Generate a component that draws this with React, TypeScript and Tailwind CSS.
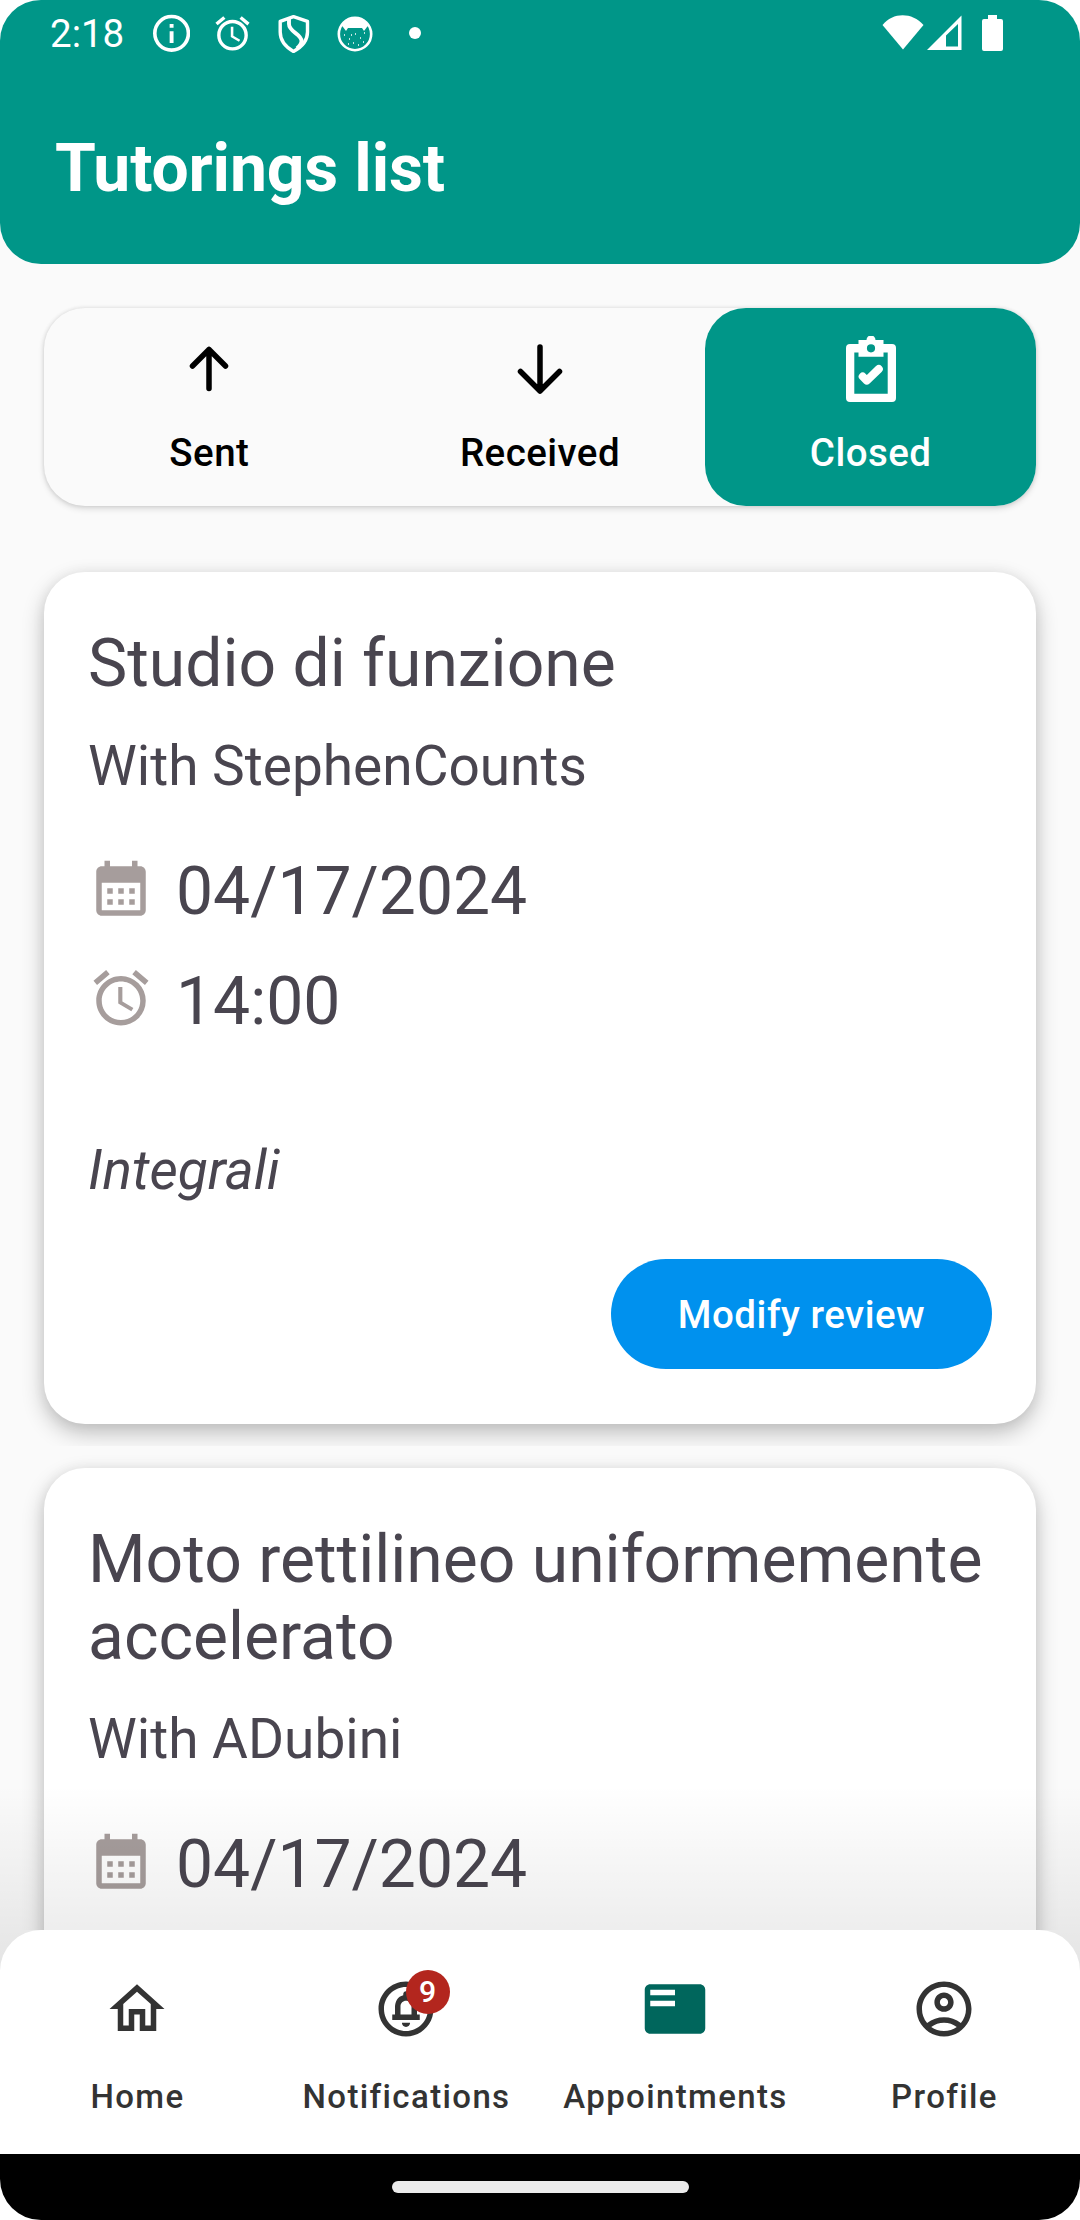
import React from "react";
import {
  MdOutlineHome,
  MdOutlineCircleNotifications,
  MdFeaturedPlayList,
  MdOutlineAccountCircle,
  MdAlarm,
} from "react-icons/md";

function StatusBar() {
  return (
    <div className="flex h-[66px] items-start justify-between pl-[50px] pr-[77px] text-white">
      <div className="flex items-start pt-[12px]">
        <span className="mt-[-1px] w-[102px] text-[38.5px] leading-[45px]">2:18</span>
        <svg className="mt-[2px] h-[38px] w-[38px]" viewBox="0 0 38 38" fill="none" stroke="#fff">
          <circle cx="19.600" cy="19.300" r="16.800" strokeWidth="3.600" />
          <path d="M19.600 17.300V29M19.600 10V13.800" strokeWidth="3.900" />
        </svg>
        <MdAlarm className="ml-[22px] mt-[1px] h-[41px] w-[41px]" />
        <svg className="ml-[24px] mt-[2px] h-[40px] w-[34px]" viewBox="0 0 34 40" fill="none" stroke="#fff" strokeWidth="3.4" strokeLinejoin="round">
          <path d="M16.500 2.600L30.500 7.400V18C30.500 27 24 33.500 16.500 37.400C9.500 33.500 3.200 27 3.200 18V7.400Z" />
          <path d="M12 4.500V10C12 18 24.500 20 24.500 27C24.500 30 22.500 32 20 34.500" strokeWidth="3.900" />
        </svg>
        <svg className="ml-[25px] mt-[3px] h-[38px] w-[38px]" viewBox="0 0 38 38">
          <circle cx="19" cy="19" r="16.2" fill="none" stroke="#fff" strokeWidth="2.6" />
          <path d="M5 10C12 0 26 0 33 10L31 12L28 16L26 13H12L10 16L7 12Z" fill="#fff" />
          <path d="M8 20h1M13 24h1M19 19h1M24 23h1M28 18h1M17 28h1M22 30h1M12 29h1M27 27h1M15 20h1" stroke="#fff" strokeWidth="1.4" />
        </svg>
        <span className="ml-[35px] mt-[15px] h-[12px] w-[12px] rounded-full bg-white" />
      </div>
      <svg className="mt-[15px] h-[37px] w-[121px]" viewBox="0 0 121 37" fill="#fff">
        <path d="M0.5 10C11 -3 30 -3 41.500 10L21 34.500Z" />
        <path fillRule="evenodd" d="M79.500 0.500V35H45Z M64 20.500V31.500H76V9Z" />
        <path d="M106 0h9v4h4a2 2 0 0 1 2 2v28a2 2 0 0 1-2 2h-17a2 2 0 0 1-2-2V6a2 2 0 0 1 2-2h4z" />
      </svg>
    </div>
  );
}

function CalendarIcon() {
  return (
    <svg className="h-[66px] w-[66px]" viewBox="0 0 24 24" fill="currentColor">
      <path
        fillRule="evenodd"
        d="M19 3h-1V1h-2v2H8V1H6v2H5c-1.100 0-2 .9-2 2v14c0 1.100.9 2 2 2h14c1.100 0 2-.9 2-2V5c0-1.100-.9-2-2-2zM19 19H5V9h14z"
      />
      <path d="M7 11h2v2H7zM11 11h2v2h-2zM15 11h2v2h-2zM7 15h2v2H7zM11 15h2v2h-2zM15 15h2v2h-2z" />
    </svg>
  );
}

type Tutoring = { title: string; tutor: string; date: string; time?: string; note?: string; reviewed?: boolean };

function TutoringCard({ title, tutor, date, time, note, reviewed }: Tutoring) {
  return (
    <div className="shrink-0 overflow-hidden px-11 py-[22px]">
      <article className="flex h-[852px] flex-col rounded-[41px] bg-white px-11 pt-[53px] text-[#49454f] shadow-[0_9px_22px_rgba(0,0,0,0.24),0_1px_14px_rgba(0,0,0,0.06)]">
        <h2 className="text-[66px] leading-[77px]">{title}</h2>
        <p className="mt-[32px] text-[55px] leading-[64px]">With {tutor}</p>
        <div className="mt-[55px] flex h-[77px] items-start">
          <span className="mt-[5px] text-[#a69d9c]"><CalendarIcon /></span>
          <span className="ml-[22px] text-[66px] leading-[77px]">{date}</span>
        </div>
        {time && (
          <div className="mt-[33px] flex h-[77px] items-start">
            <MdAlarm className="mt-[2px] h-[66px] w-[66px] text-[#a69d9c]" />
            <span className="ml-[22px] text-[66px] leading-[77px]">{time}</span>
          </div>
        )}
        {note && <p className="mt-[98px] text-[55px] italic leading-[64px]">{note}</p>}
        {reviewed && (
          <button className="mt-[57px] h-[110px] w-[381px] shrink-0 self-end rounded-full bg-[#0091ee] pt-[2px] text-center text-[38.5px] font-medium tracking-[0.5px] text-white">
            Modify review
          </button>
        )}
      </article>
    </div>
  );
}

const tutorings: Tutoring[] = [
  { title: "Studio di funzione", tutor: "StephenCounts", date: "04/17/2024", time: "14:00", note: "Integrali", reviewed: true },
  { title: "Moto rettilineo uniformemente accelerato", tutor: "ADubini", date: "04/17/2024" },
];

function Tabs() {
  return (
    <div className="mx-11 mt-11 grid h-[198px] shrink-0 grid-cols-3 rounded-[41px] bg-[#fafafa] text-[38.5px] font-medium leading-[55px] tracking-[0.45px] text-black shadow-[0_3px_6px_rgba(0,0,0,0.12),0_0px_4px_rgba(0,0,0,0.12)]">
      <div className="flex flex-col items-center">
        <svg className="mt-[28px] h-[66px] w-[66px]" viewBox="0 0 66 66" fill="none" stroke="currentColor" strokeWidth="5.5" strokeLinecap="round" strokeLinejoin="round">
          <path d="M33 52.500V13.500M16.500 30L33 13.500L49.500 30" />
        </svg>
        <span className="mt-[23px]">Sent</span>
      </div>
      <div className="flex flex-col items-center">
        <svg className="mt-[28px] h-[66px] w-[66px]" viewBox="0 0 66 66" fill="none" stroke="currentColor" strokeWidth="5.5" strokeLinecap="round" strokeLinejoin="round">
          <path d="M33 11V55M13.500 35.500L33 55L52.500 35.500" />
        </svg>
        <span className="mt-[23px]">Received</span>
      </div>
      <div className="flex flex-col items-center rounded-[41px] bg-[#009688] text-white">
        <svg className="mt-[28px] h-[66px] w-[50px]" viewBox="0 0 50 66">
          <path
            fill="currentColor"
            fillRule="evenodd"
            d="M4 8H12.500V4H20.500A4.300 4.300 0 0 1 29.500 4H37.500V8H46A4 4 0 0 1 50 12V62A4 4 0 0 1 46 66H4A4 4 0 0 1 0 62V12A4 4 0 0 1 4 8ZM8.300 16.500V57.700H41.700V16.500H37.500V20.700H12.500V16.500ZM25 8.200A4.100 4.100 0 1 0 25 16.400A4.100 4.100 0 1 0 25 8.200Z"
          />
          <path d="M16.700 40.500L20.800 44.600L32.800 33" fill="none" stroke="currentColor" strokeWidth="8" strokeLinecap="round" strokeLinejoin="round" />
        </svg>
        <span className="mt-[23px]">Closed</span>
      </div>
    </div>
  );
}

function NavItem({ label, active, children }: { label: string; active?: boolean; children: React.ReactNode }) {
  return (
    <div className="flex flex-col items-center">
      <div className={active ? "relative mt-[46px] text-[#00665c]" : "relative mt-[46px] text-[#333333]"}>{children}</div>
      <span className="mt-[33px] pl-[2px] text-[33px] font-medium leading-[44px] tracking-[1.375px] text-[#333333]">{label}</span>
    </div>
  );
}

function BottomNav() {
  return (
    <nav className="relative h-[224px] shrink-0">
      <div className="pointer-events-none absolute inset-x-0 top-[-145px] h-[190px] bg-linear-to-b from-black/0 to-black/9" />
      <div className="relative grid h-full grid-cols-4 rounded-t-[41px] bg-white px-[2px]">
        <NavItem label="Home"><MdOutlineHome className="h-[66px] w-[66px]" /></NavItem>
        <NavItem label="Notifications">
          <MdOutlineCircleNotifications className="h-[66px] w-[66px]" />
          <span className="absolute left-[33px] top-[-6px] flex h-[44px] w-[44px] items-center justify-center rounded-full bg-[#b3261e] pt-[1px] text-[30.25px] font-medium leading-none text-white">9</span>
        </NavItem>
        <NavItem label="Appointments" active><MdFeaturedPlayList className="h-[66px] w-[66px]" /></NavItem>
        <NavItem label="Profile"><MdOutlineAccountCircle className="h-[66px] w-[66px]" /></NavItem>
      </div>
    </nav>
  );
}

export default function App() {
  return (
    <div className="h-[2220px] w-[1080px] bg-white font-[Roboto,sans-serif]">
      <div className="flex h-full w-full flex-col overflow-hidden rounded-[41px] bg-[#fafafa]">
        <header className="h-[264px] shrink-0 rounded-b-[41px] bg-[#009688]">
          <StatusBar />
          <h1 className="ml-[55px] mt-[64px] text-[66px] font-bold leading-[77px] tracking-[-0.15px] text-white">Tutorings list</h1>
        </header>
        <Tabs />
        <main className="mt-11 flex min-h-0 flex-1 flex-col overflow-hidden">
          {tutorings.map((t) => (
            <TutoringCard key={t.title} {...t} />
          ))}
        </main>
        <BottomNav />
        <div className="flex h-[66px] shrink-0 justify-center bg-black pt-[27px]">
          <div className="h-[12px] w-[297px] rounded-full bg-[#ebebeb]" />
        </div>
      </div>
    </div>
  );
}
